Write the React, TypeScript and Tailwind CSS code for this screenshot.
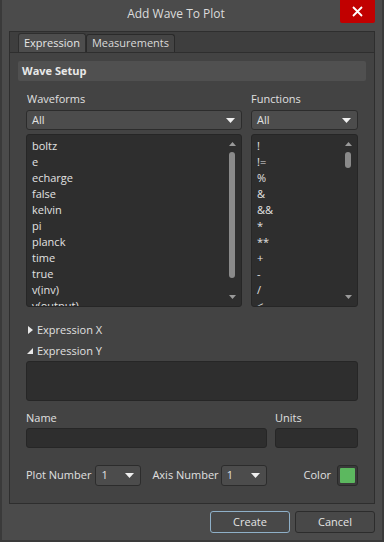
import React from "react";

const font = { fontFamily: '"Open Sans", "Noto Sans", sans-serif' };

function Caret() {
  return (
    <svg width="9" height="5" viewBox="0 0 9 5" className="shrink-0">
      <path d="M0 0 L9 0 L4.5 5 Z" fill="#f0f0f0" />
    </svg>
  );
}

function Select({ value, className }: { value: string; className: string }) {
  return (
    <div
      className={
        "flex items-center justify-between rounded-[3px] border border-[#2c2c2c] bg-[#4c4c4c] pl-[5px] pr-[6px] text-[11px] text-[#e2e2e2] " +
        className
      }
    >
      <span>{value}</span>
      <Caret />
    </div>
  );
}

function ScrollBar({ thumbTop, thumbH }: { thumbTop: number; thumbH: number }) {
  return (
    <div className="relative w-[10px] h-full">
      <svg width="7" height="4" viewBox="0 0 7 4" className="absolute left-[1px] top-[7px]">
        <path d="M0 4 L7 4 L3.5 0 Z" fill="#9a9a9a" />
      </svg>
      <div
        className="absolute left-[1px] w-[6px] rounded-[3px] bg-[#8a8a8a]"
        style={{ top: thumbTop, height: thumbH }}
      />
      <svg width="7" height="4" viewBox="0 0 7 4" className="absolute left-[1px] bottom-[7px]">
        <path d="M0 0 L7 0 L3.5 4 Z" fill="#9a9a9a" />
      </svg>
    </div>
  );
}

function List({ items, className, thumbTop, thumbH }: { items: string[]; className: string; thumbTop: number; thumbH: number }) {
  return (
    <div className={"flex h-[173px] overflow-hidden rounded-[3px] border border-[#262626] bg-[#2e2e2e] " + className}>
      <div className="flex-1 overflow-hidden pt-[3px] pl-[5px] text-[11px] leading-[16px] text-[#e2e2e2]">
        {items.map((it, i) => (
          <div key={i} className="h-[16px] whitespace-pre">
            {it}
          </div>
        ))}
      </div>
      <div className="pr-[3px]">
        <ScrollBar thumbTop={thumbTop} thumbH={thumbH} />
      </div>
    </div>
  );
}

export default function App() {
  const waves = ["boltz", "e", "echarge", "false", "kelvin", "pi", "planck", "time", "true", "v(inv)", "v(output)"];
  const funcs = ["!", "!=", "%", "&", "&&", "*", "**", "+", "-", "/", "<"];
  return (
    <div
      className="relative flex h-[542px] w-[384px] flex-col border-x-2 border-b-2 border-[#3a3a3a] bg-[#4b4b4b] text-[#e0e0e0]"
      style={font}
    >
      {/* title bar */}
      <div className="relative flex h-[31px] items-center justify-center text-[12px] text-[#dcdcdc]">
        <span className="-mt-[3px] ml-[-32px]">Add Wave To Plot</span>
        <div className="absolute right-[7px] top-0 flex h-[23px] w-[35px] items-center justify-center rounded-b-[2px] bg-[#c10000]">
          <svg width="11" height="11" viewBox="0 0 11 11">
            <path d="M1 1 L10 10 M10 1 L1 10" stroke="#ffffff" strokeWidth="1.8" />
          </svg>
        </div>
      </div>

      {/* tabs frame */}
      <div className="mx-[7px] flex flex-col border border-[#2e2e2e] bg-[#3e3e3e]">
        <div className="flex h-[20px] items-end pl-[8px]">
          <div className="flex h-[19px] items-center rounded-t-[3px] border border-b-0 border-[#2e2e2e] bg-[#4d4d4d] px-[5px] text-[11px] text-[#e6e6e6]">
            Expression
          </div>
          <div className="flex h-[18px] items-center rounded-t-[3px] border border-b-0 border-[#2a2a2a] bg-[#444444] px-[5px] text-[11px] text-[#dadada]">
            Measurements
          </div>
        </div>
        <div className="flex h-[451px] flex-col border-t border-[#2e2e2e] bg-[#434343] px-[8px]">
          <div className="mt-[8px] flex h-[20px] items-center rounded-[2px] bg-[#505050] pl-[4px] text-[11px] font-bold text-[#e8e8e8]">
            Wave Setup
          </div>
          <div className="flex flex-col px-[8px]">
            <div className="mt-[10px] flex gap-[9px]">
              <div className="flex w-[216px] flex-col">
                <div className="h-[16px] pl-[1px] text-[11px] leading-[16px]">Waveforms</div>
                <Select value="All" className="mt-[3px] h-[20px]" />
                <List items={waves} className="mt-[4px]" thumbTop={17} thumbH={126} />
              </div>
              <div className="flex w-[107px] flex-col">
                <div className="h-[16px] text-[11px] leading-[16px]">Functions</div>
                <Select value="All" className="mt-[3px] h-[20px]" />
                <List items={funcs} className="mt-[4px]" thumbTop={17} thumbH={16} />
              </div>
            </div>

            <div className="mt-[15px] flex h-[16px] items-center gap-[4px] pl-[2px] text-[11px]">
              <svg width="5" height="8" viewBox="0 0 5 8">
                <path d="M0 0 L5 4 L0 8 Z" fill="#e8e8e8" />
              </svg>
              <span>Expression X</span>
            </div>
            <div className="mt-[5px] flex h-[16px] items-center gap-[4px] pl-[1px] text-[11px]">
              <svg width="6" height="6" viewBox="0 0 6 6">
                <path d="M6 0 L6 6 L0 6 Z" fill="#e8e8e8" />
              </svg>
              <span>Expression Y</span>
            </div>
            <div className="mt-[2px] h-[40px] w-[332px] rounded-[3px] border border-[#262626] bg-[#2e2e2e]" />

            <div className="mt-[9px] flex gap-[8px]">
              <div className="flex w-[241px] flex-col">
                <div className="h-[16px] text-[11px] leading-[16px]">Name</div>
                <div className="mt-[2px] h-[20px] rounded-[3px] border border-[#262626] bg-[#2e2e2e]" />
              </div>
              <div className="flex w-[83px] flex-col">
                <div className="h-[16px] text-[11px] leading-[16px]">Units</div>
                <div className="mt-[2px] h-[20px] rounded-[3px] border border-[#262626] bg-[#2e2e2e]" />
              </div>
            </div>

            <div className="mt-[17px] flex h-[21px] w-[332px] items-center text-[11px]">
              <span>Plot Number</span>
              <Select value="1" className="ml-[4px] h-[21px] w-[46px]" />
              <span className="ml-[11px]">Axis Number</span>
              <Select value="1" className="ml-[2px] h-[21px] w-[46px]" />
              <span className="ml-auto">Color</span>
              <div className="ml-[6px] flex h-[21px] w-[21px] items-center justify-center rounded-[3px] border border-[#2a2a2a] bg-[#3a3a3a]">
                <div className="h-[15px] w-[15px] rounded-[1px] bg-[#5cb85f]" />
              </div>
            </div>
          </div>
        </div>
      </div>

      {/* buttons */}
      <div className="mr-[7px] mt-[7px] flex justify-end gap-[5px]">
        <div className="flex h-[22px] w-[80px] items-center justify-center rounded-[3px] border border-[#8fb0c8] bg-[#484848] text-[11px] text-[#e4e4e4]">
          Create
        </div>
        <div className="flex h-[22px] w-[80px] items-center justify-center rounded-[3px] border border-[#2c2c2c] bg-[#484848] text-[11px] text-[#e4e4e4]">
          Cancel
        </div>
      </div>
    </div>
  );
}
